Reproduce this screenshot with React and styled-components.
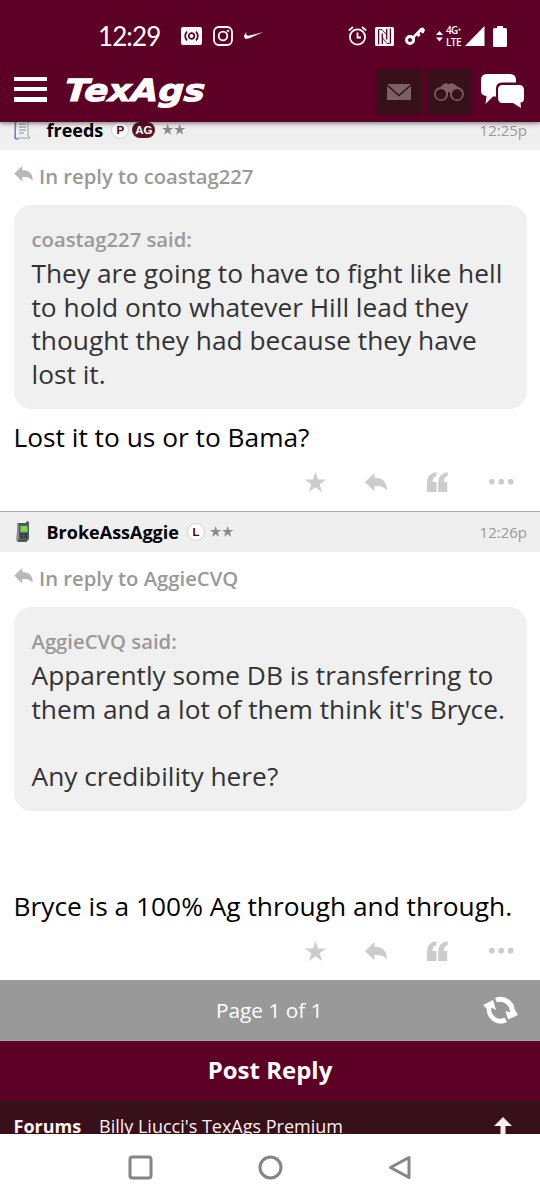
import React from "react";
import styled, { createGlobalStyle } from "styled-components";

const Global = createGlobalStyle`
  * { box-sizing: border-box; }
  body { margin: 0; background: #fff; font-family: "Open Sans", "Noto Sans", sans-serif; }
  svg { display: block; flex: none; overflow: visible; }
`;

const Screen = styled.div`
  width: 540px;
  height: 1200px;
  display: flex;
  flex-direction: column;
  overflow: hidden;
  background: #fff;
`;

const TopArea = styled.header`
  flex: none;
  height: 122px;
  background: #5c0025;
  color: #fff;
  position: relative;
  z-index: 2;
  box-shadow: 0 1px 5px rgba(0, 0, 0, 0.55);
`;

const StatusBar = styled.div`
  height: 70px;
  padding: 2px 33px 0 98px;
  display: flex;
  align-items: center;
`;

const Clock = styled.span`
  width: 83px;
  font-family: Lato, sans-serif;
  font-size: 26px;
  letter-spacing: -0.9px;
  line-height: 30px;
  white-space: nowrap;
`;

const StatusGroup = styled.div`
  display: flex;
  align-items: center;
  gap: ${(p) => p.$gap}px;
  margin-left: ${(p) => p.$push || 0};
`;

const NavBar = styled.nav`
  height: 52px;
  padding: 0 16px 0 14px;
  display: flex;
  align-items: center;
`;

const MenuIcon = styled.div`
  width: 33px;
  height: 25px;
  margin-top: -14px;
  display: flex;
  flex-direction: column;
  justify-content: space-between;
`;

const MenuBar = styled.span`
  height: 4.5px;
  background: #fff;
`;

const Logo = styled.div`
  margin: -8px auto 0 18px;
`;

const NavButtons = styled.div`
  display: flex;
  align-items: center;
  gap: 6px;
`;

const NavButton = styled.div`
  width: 44px;
  height: 44px;
  margin-top: -8px;
  border-radius: 3px;
  background: #37101a;
  box-shadow: 0 0 3px #37101a;
  color: #7d5f66;
  display: flex;
  align-items: center;
  justify-content: center;
`;

const ChatButton = styled.div`
  margin: -11px 0 0 4px;
`;

const Thread = styled.main`
  flex: none;
  height: 858px;
  overflow: hidden;
`;

const Post = styled.article`
  height: ${(p) => p.$height}px;
  margin-top: ${(p) => p.$offset || 0}px;
  padding-bottom: 9px;
  display: flex;
  flex-direction: column;
`;

const PostHeader = styled.div`
  flex: none;
  height: 41px;
  border-top: 1px solid #aaa;
  padding: 0 13px 0 14px;
  background: #efefef;
  display: flex;
  align-items: center;
`;

const AvatarSlot = styled.div`
  width: 32.5px;
`;

const UserName = styled.span`
  font-size: 18px;
  font-weight: 700;
  line-height: 24px;
  color: #000;
  margin-right: 8px;
`;

const Badge = styled.span`
  height: ${(p) => (p.$dark ? 16 : 18)}px;
  width: ${(p) => (p.$dark ? 23 : 18)}px;
  margin-right: ${(p) => p.$gap}px;
  border-radius: 9px;
  border: ${(p) => (p.$dark ? "0" : "1px solid #d2d2d2")};
  background: ${(p) => (p.$dark ? "#5a1424" : "#fff")};
  color: ${(p) => (p.$dark ? "#fff" : "#500018")};
  font-family: "Liberation Sans", Arial, sans-serif;
  font-size: 11.5px;
  font-weight: 700;
  display: flex;
  align-items: center;
  justify-content: center;
`;

const Time = styled.span`
  margin-left: auto;
  font-size: 15px;
  color: #999;
`;

const ReplyTo = styled.div`
  flex: none;
  height: 55px;
  padding: 0 14px 3px;
  display: flex;
  align-items: center;
  gap: 6px;
  color: #999;
  font-size: 20.25px;
  font-weight: 600;
  white-space: nowrap;
`;

const ReplyMark = styled.span`
  margin-top: -5px;
  color: #b8b8b8;
`;

const Quote = styled.blockquote`
  flex: none;
  height: 204px;
  margin: 0 13.5px;
  padding: 18px;
  border-radius: 18px;
  background: #f0f0f0;
  color: #333;
  font-size: 26.3px;
  line-height: 33.75px;
  white-space: nowrap;
`;

const QuoteAuthor = styled.div`
  color: #999;
  font-size: 20.25px;
  font-weight: 600;
`;

const QuoteLine = styled.div`
  height: 33.75px;
`;

const Message = styled.p`
  margin: ${(p) => p.$space}px 13.5px 0;
  color: #000;
  font-size: 26.3px;
  line-height: 34px;
  white-space: nowrap;
`;

const Actions = styled.div`
  margin-top: auto;
  height: 40px;
  padding-right: 26px;
  display: flex;
  align-items: center;
  justify-content: flex-end;
  color: #ccc;
`;

const Action = styled.span`
  width: ${(p) => p.$w}px;
  display: flex;
`;

const Pager = styled.div`
  flex: none;
  height: 61px;
  padding: 0 22px 0 216px;
  background: #999;
  border-bottom: 1px solid #aaa1a4;
  color: #fff;
  display: flex;
  align-items: center;
  justify-content: space-between;
  font-size: 20.8px;
`;

const PostReply = styled.div`
  flex: none;
  height: 59px;
  padding-bottom: 2px;
  background: #5c0025;
  color: #fff;
  font-size: 24px;
  font-weight: 700;
  display: flex;
  align-items: center;
  justify-content: center;
`;

const Crumbs = styled.div`
  flex: none;
  height: 34px;
  overflow: hidden;
  padding: 12px 28px 0 13.5px;
  background: #37101a;
  color: #fff0f0;
  font-size: 18px;
  line-height: 28px;
  display: flex;
  white-space: nowrap;
`;

const CrumbRoot = styled.span`
  width: 85.5px;
  font-weight: 700;
`;

const TopLink = styled.span`
  margin-left: auto;
  padding-top: 5px;
`;

const SystemNav = styled.footer`
  flex: none;
  height: 66px;
  padding: 0 128px;
  display: flex;
  align-items: center;
  justify-content: space-between;
  background: #fff;
`;

const Svg = ({ w, h, children, ...rest }) => (
  <svg width={w} height={h} viewBox={`0 0 ${w} ${h}`} fill="currentColor" {...rest}>
    {children}
  </svg>
);

const CastIcon = () => (
  <Svg w={21} h={18}>
    <rect width="21" height="18" rx="2" />
    <g fill="none" stroke="#5c0025" strokeWidth="1.7">
      <circle cx="10.5" cy="9" r="2.8" />
      <path d="M6 4.5Q2.4 9 6 13.5M15 4.5Q18.600 9 15 13.5" />
    </g>
  </Svg>
);

const InstagramIcon = () => (
  <Svg w={20} h={20} fill="none" stroke="currentColor" strokeWidth="1.800">
    <rect x="1" y="1" width="18" height="18" rx="5" />
    <circle cx="10" cy="10" r="4.3" />
    <circle cx="15" cy="5" r="0.4" />
  </Svg>
);

const SwooshIcon = () => (
  <Svg w={20} h={10}>
    <path d="M2.500 1C0 3.500-.5 6 .8 7.200C2 8.300 4.400 7.600 6 7L19.500 1L5.500 4.600C2.800 5.200 1.500 4 2.500 1Z" />
  </Svg>
);

const AlarmIcon = () => (
  <Svg w={19} h={20} fill="none" stroke="currentColor" strokeWidth="1.800">
    <circle cx="9.5" cy="11" r="7.600" />
    <path d="M9.500 6.500V11.500H13M.8 4.500L5 1M18.200 4.500L14 1" />
  </Svg>
);

const NfcIcon = () => (
  <Svg w={19} h={19}>
    <rect width="19" height="19" rx="1.500" />
    <path d="M3.600 2.500V17.500M7.300 17V6.500M11.700 2V12.500M15.400 1.500V16.500" fill="none" stroke="#5c0025" strokeWidth="1.300" />
    <path d="M3.600 2.500L7 2.500L11.700 8M15.400 16.500H12L7.300 10.500" fill="none" stroke="#5c0025" strokeWidth=".9" />
  </Svg>
);

const KeyIcon = () => (
  <Svg w={21} h={19}>
    <circle cx="5" cy="13" r="3.5" fill="none" stroke="currentColor" strokeWidth="3" />
    <path d="M7 10L15.500 1L18 .5L20 2.800L18.800 6L17 6.500L16 4.800L14.500 6L15.500 8L13.500 10L11.500 8.500L9 12Z" />
  </Svg>
);

const DataIcon = () => (
  <Svg w={7} h={11}>
    <path d="M3.500 0L7 4H0ZM0 6.500H7L3.500 10.500Z" />
  </Svg>
);

const NetworkLabel = styled.span`
  width: 16px;
  display: flex;
  flex-direction: column;
  font-size: 10px;
  line-height: 12px;
  font-weight: 600;
  letter-spacing: -0.6px;
  white-space: nowrap;
`;

const SignalIcon = () => (
  <Svg w={20} h={20}>
    <path d="M19.500 0V20H0Z" />
  </Svg>
);

const BatteryIcon = () => (
  <Svg w={14} h={21}>
    <path d="M4 0H10V2H12.500Q14 2 14 3.500V19.500Q14 21 12.500 21H1.500Q0 21 0 19.500V3.500Q0 2 1.500 2H4Z" />
  </Svg>
);

const EnvelopeIcon = () => (
  <Svg w={24} h={16}>
    <path d="M0 0H24L12 10.500ZM0 2L12 12.500L24 2V16H0Z" />
  </Svg>
);

const BinocularsIcon = () => (
  <Svg w={30} h={18}>
    <path fillRule="evenodd" d="M6.500 4L10 .8Q12.500-.5 14 1H16Q17.500-.5 20 .8L24 4A7 7 0 1 1 16 9.500Q15 8 14 9.500A7 7 0 1 1 6.500 4ZM7 6A5.200 5.200 0 1 0 7 16.400A5.200 5.200 0 1 0 7 6ZM23 6A5.200 5.200 0 1 0 23 16.400A5.200 5.200 0 1 0 23 6Z" />
  </Svg>
);

const ChatIcon = () => (
  <Svg w={43} h={34}>
    <path d="M6 0H29Q35 0 35 6V8.500H21Q15 8.500 15 14.500V22.500H12L4.500 30L5.500 22Q0 21.500 0 16.500V6Q0 0 6 0Z" />
    <path d="M21.500 11H38Q43 11 43 16V24Q43 28.500 39.500 28.500L40 34L32 29H21.500Q17 29 17 24V16Q17 11 21.500 11Z" />
  </Svg>
);

const Wordmark = () => (
  <Svg w={140} h={32}>
    <g transform="skewX(-4)">
      <text
        x="1"
        y="25"
        fontFamily="DejaVu Sans"
        fontStyle="italic"
        fontWeight="700"
        fontSize="30.5"
        textLength="140"
        lengthAdjust="spacingAndGlyphs"
        stroke="currentColor"
        strokeWidth="1"
      >
        TexAgs
      </text>
    </g>
  </Svg>
);

const NoteAvatar = () => (
  <Svg w={16} h={20}>
    <path d="M2 1H14V16L16 18H4L1 19Z" fill="#eef1f2" stroke="#9a9fa8" strokeWidth="1" />
    <path d="M1.200 0V18L4 19.500" fill="none" stroke="#7274b8" strokeWidth="1.300" />
    <path d="M5 4H12M5 7H12M5 10H12M5 13H10" stroke="#7e8a96" strokeWidth="1.200" />
  </Svg>
);

const PhoneAvatar = () => (
  <Svg w={18} h={22}>
    <path d="M3.500 2H12V1Q13.500-.5 15 1V18L12.500 21H5Q2.500 21 2.500 18Z" fill="#55585a" />
    <path d="M4 3V19" stroke="#999d9d" strokeWidth="1.500" />
    <rect x="6.500" y="5" width="7" height="6" rx=".5" fill="#74db50" />
    <path d="M6.500 13.500H9M10.500 13.500H13M6.500 16H9M10.500 16H13" stroke="#292d2e" strokeWidth="1.300" />
  </Svg>
);

const STAR = "M10.500 0L13.100 7.500H21L14.700 12.200L17 20L10.500 15.300L4 20L6.300 12.200L0 7.500H7.900Z";

const Stars = () => (
  <Svg w={24} h={12}>
    <path d={STAR} transform="scale(.54)" fill="#8d8d8d" />
    <path d={STAR} transform="translate(12 0) scale(.54)" fill="#8d8d8d" />
  </Svg>
);

const ReplyIcon = ({ w = 22, h = 19 }) => (
  <svg width={w} height={h} viewBox="0 0 22 19" fill="currentColor">
    <path d="M0 9L9.500 0V4.700C18 4.700 22 9 22 17.500C18.500 13.200 15 12.800 9.500 13V18.500Z" />
  </svg>
);

const QuoteIcon = () => (
  <Svg w={21} h={20}>
    <path d="M9.500 0V4Q5.500 5 5.500 10H9.500V20H0V11Q0 1.500 9.500 0Z" />
    <path d="M20.700 0V4Q16.700 5 16.700 10H20.200V20H11.200V11Q11.200 1.500 20.700 0Z" />
  </Svg>
);

const DotsIcon = () => (
  <Svg w={25} h={6}>
    <rect width="5.500" height="5.500" rx="2" />
    <rect x="9.500" width="5.500" height="5.500" rx="2" />
    <rect x="19" width="5.500" height="5.500" rx="2" />
  </Svg>
);

const RefreshIcon = () => (
  <Svg w={35} h={28}>
    <path d="M4 11A14 14 0 0 0 24 26L21.500 21.500A9 9 0 0 1 9 10Z" />
    <path d="M0 9L10 4L13 14L8.500 11.500L4 13Z" />
    <path d="M12 2A14 14 0 0 1 31.500 17L26.500 18A9.500 9.500 0 0 0 14 6.500Z" />
    <path d="M22.500 15L27 16.500L31.500 13L35 19L25 23.500Z" />
  </Svg>
);

const ArrowUpIcon = () => (
  <Svg w={18} h={22}>
    <path d="M9 0L18 9H11.500V22H6.500V9H0Z" />
  </Svg>
);

const PostActions = () => (
  <Actions>
    <Action $w={60}><Svg w={21} h={20}><path d={STAR} /></Svg></Action>
    <Action $w={62}><ReplyIcon /></Action>
    <Action $w={62}><QuoteIcon /></Action>
    <Action $w={25}><DotsIcon /></Action>
  </Actions>
);

const Reply = ({ to, lines }) => (
  <>
    <ReplyTo>
      <ReplyMark><ReplyIcon w={19} h={16} /></ReplyMark>
      In reply to {to}
    </ReplyTo>
    <Quote>
      <QuoteAuthor>{to} said:</QuoteAuthor>
      {lines.map((line, i) => <QuoteLine key={i}>{line}</QuoteLine>)}
    </Quote>
  </>
);

export default function App() {
  return (
    <Screen>
      <Global />
      <TopArea>
        <StatusBar>
          <Clock>12:29</Clock>
          <StatusGroup $gap={11}>
            <CastIcon />
            <InstagramIcon />
            <SwooshIcon />
          </StatusGroup>
          <StatusGroup $gap={8} $push="auto">
            <AlarmIcon />
            <NfcIcon />
            <StatusGroup $gap={10} $push="3px">
              <KeyIcon />
              <StatusGroup $gap={3}>
                <DataIcon />
                <NetworkLabel><span>4G⁺</span><span>LTE</span></NetworkLabel>
                <SignalIcon />
              </StatusGroup>
            </StatusGroup>
            <BatteryIcon />
          </StatusGroup>
        </StatusBar>
        <NavBar>
          <MenuIcon><MenuBar /><MenuBar /><MenuBar /></MenuIcon>
          <Logo><Wordmark /></Logo>
          <NavButtons>
            <NavButton><EnvelopeIcon /></NavButton>
            <NavButton><BinocularsIcon /></NavButton>
            <ChatButton><ChatIcon /></ChatButton>
          </NavButtons>
        </NavBar>
      </TopArea>

      <Thread>
        <Post $height={402} $offset={-13}>
          <PostHeader>
            <AvatarSlot><NoteAvatar /></AvatarSlot>
            <UserName>freeds</UserName>
            <Badge $gap={3}>P</Badge>
            <Badge $dark $gap={7}>AG</Badge>
            <Stars />
            <Time>12:25p</Time>
          </PostHeader>
          <Reply
            to="coastag227"
            lines={[
              "They are going to have to fight like hell",
              "to hold onto whatever Hill lead they",
              "thought they had because they have",
              "lost it.",
            ]}
          />
          <Message $space={11}>Lost it to us or to Bama?</Message>
          <PostActions />
        </Post>
        <Post $height={469}>
          <PostHeader>
            <AvatarSlot><PhoneAvatar /></AvatarSlot>
            <UserName>BrokeAssAggie</UserName>
            <Badge $gap={5}>L</Badge>
            <Stars />
            <Time>12:26p</Time>
          </PostHeader>
          <Reply
            to="AggieCVQ"
            lines={[
              "Apparently some DB is transferring to",
              "them and a lot of them think it's Bryce.",
              "",
              "Any credibility here?",
            ]}
          />
          <Message $space={78}>Bryce is a 100% Ag through and through.</Message>
          <PostActions />
        </Post>
      </Thread>

      <Pager>
        <span>Page 1 of 1</span>
        <RefreshIcon />
      </Pager>
      <PostReply>Post Reply</PostReply>
      <Crumbs>
        <CrumbRoot>Forums</CrumbRoot>
        <span>Billy Liucci's TexAgs Premium</span>
        <TopLink><ArrowUpIcon /></TopLink>
      </Crumbs>
      <SystemNav>
        <Svg w={25} h={25} fill="none" stroke="#858585" strokeWidth="3">
          <rect x="2" y="2" width="21" height="21" rx="2.500" />
        </Svg>
        <Svg w={25} h={25} fill="none" stroke="#858585" strokeWidth="3">
          <circle cx="12.500" cy="12.500" r="10.500" />
        </Svg>
        <Svg w={24} h={25} fill="none" stroke="#858585" strokeWidth="3" strokeLinejoin="round">
          <path d="M21 2.500V22.500L2.500 12.500Z" />
        </Svg>
      </SystemNav>
    </Screen>
  );
}
